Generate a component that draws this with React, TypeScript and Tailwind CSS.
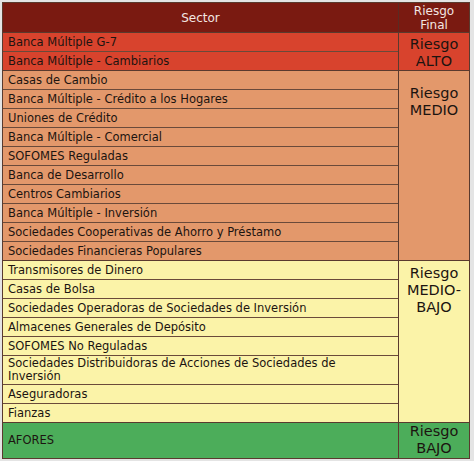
const groups = [
  {
    label: ['Riesgo', 'ALTO'],
    bg: 'bg-[#d8432d]',
    pt: 'pt-[3px]',
    rows: ['Banca Múltiple G-7', 'Banca Múltiple - Cambiarios'],
  },
  {
    label: ['Riesgo', 'MEDIO'],
    bg: 'bg-[#e3986b]',
    pt: 'pt-[14px]',
    rows: [
      'Casas de Cambio',
      'Banca Múltiple - Crédito a los Hogares',
      'Uniones de Crédito',
      'Banca Múltiple - Comercial',
      'SOFOMES Reguladas',
      'Banca de Desarrollo',
      'Centros Cambiarios',
      'Banca Múltiple - Inversión',
      'Sociedades Cooperativas de Ahorro y Préstamo',
      'Sociedades Financieras Populares',
    ],
  },
  {
    label: ['Riesgo', 'MEDIO-', 'BAJO'],
    bg: 'bg-[#fbf3a8]',
    pt: 'pt-[4px]',
    rows: [
      'Transmisores de Dinero',
      'Casas de Bolsa',
      'Sociedades Operadoras de Sociedades de Inversión',
      'Almacenes Generales de Depósito',
      'SOFOMES No Reguladas',
      'Sociedades Distribuidoras de Acciones de Sociedades de\nInversión',
      'Aseguradoras',
      'Fianzas',
    ],
  },
  {
    label: ['Riesgo', 'BAJO'],
    bg: 'bg-[#4cad5a]',
    pt: 'pt-0',
    rows: ['AFORES'],
  },
]

function rowHeight(text: string, i: number, count: number) {
  if (count === 1) return 'h-[35px]'
  if (text.includes('\n')) return 'h-[29px]'
  return i === 0 ? 'h-[18px]' : 'h-[19px]'
}

export default function App() {
  return (
    <div className="w-[474px] h-[461px] bg-[#e4e4e4] pt-[2px] pl-[2px]" style={{ fontFamily: '"DejaVu Sans", sans-serif' }}>
      <div className="w-[468px] border border-[#5a3a2e] text-[#1c1410]">
        {/* header */}
        <div className="flex bg-[#7a1a11] text-[#f3e6e2] text-[12px] h-[29px]">
          <div className="w-[396px] border-r border-[#5a2a22] flex items-center justify-center">Sector</div>
          <div className="flex-1 flex flex-col items-center justify-center leading-[14px]">
            <span>Riesgo</span>
            <span>Final</span>
          </div>
        </div>

        {groups.map((g, gi) => (
          <div key={gi} className={`flex border-t border-[#5a3a2e] ${g.bg}`}>
            <div className="w-[396px] border-r border-[#5a3a2e]">
              {g.rows.map((r, i) => (
                <div
                  key={i}
                  className={`px-[5px] text-[11.5px] leading-[13px] flex items-center whitespace-pre-line ${i > 0 ? 'border-t border-[#6a4a3a]' : ''} ${rowHeight(r, i, g.rows.length)}`}
                >
                  {r}
                </div>
              ))}
            </div>
            <div className={`flex-1 flex flex-col items-center justify-start text-[14.5px] leading-[17px] ${g.pt}`}>
              {g.label.map((l, i) => (
                <span key={i}>{l}</span>
              ))}
            </div>
          </div>
        ))}
      </div>
    </div>
  )
}
